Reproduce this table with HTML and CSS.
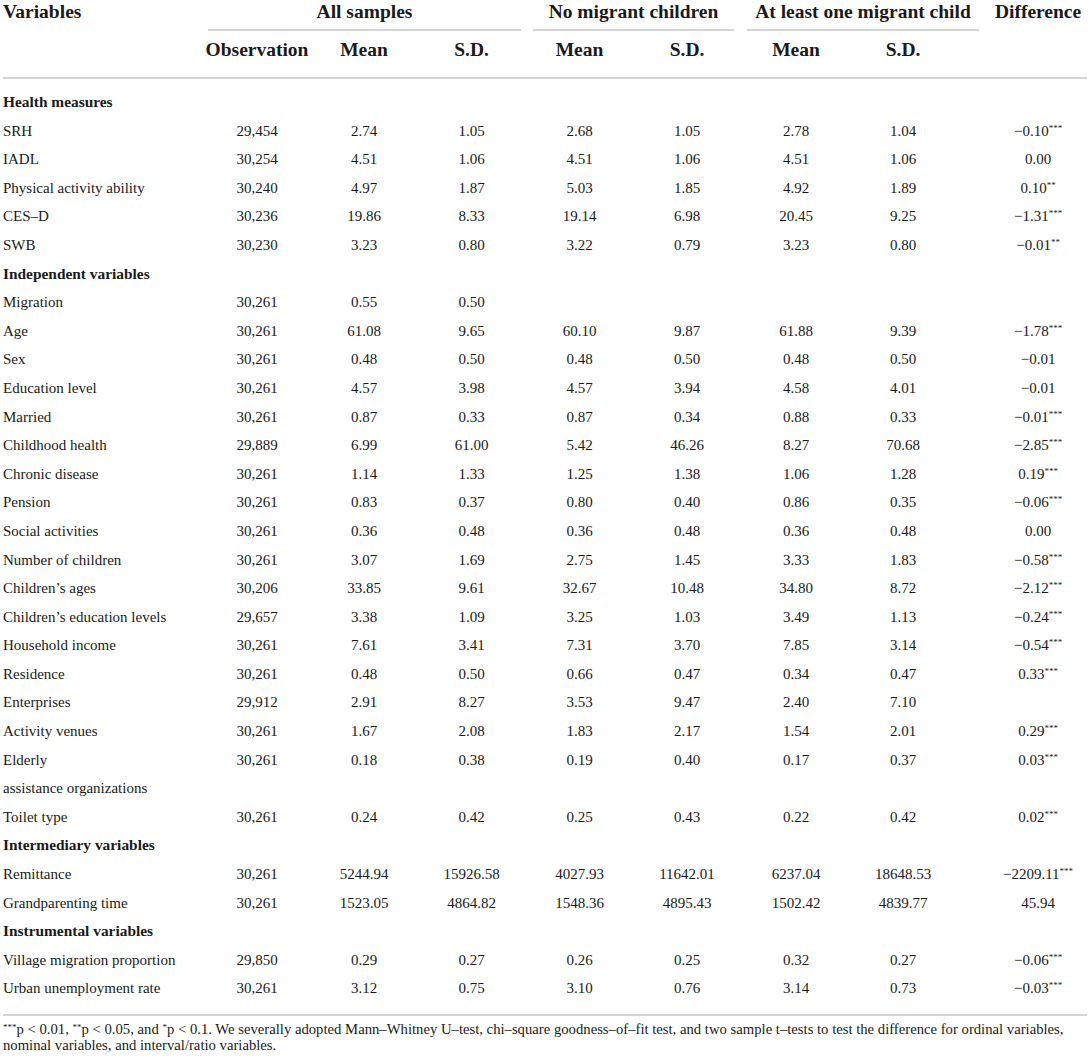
FILE: index.html
```html
<!DOCTYPE html>
<html lang="en">
<head>
<meta charset="utf-8">
<title>Descriptive statistics</title>
<link rel="stylesheet" href="styles.css">
</head>
<body>
<div class="wrap">
<table class="stats">
  <colgroup>
    <col class="c-var">
    <col class="c-obs">
    <col class="c-mean">
    <col class="c-sd">
    <col class="c-nm-mean">
    <col class="c-nm-sd">
    <col class="c-al-mean">
    <col class="c-al-sd">
    <col class="c-diff">
  </colgroup>
  <thead>
    <tr class="h1">
      <th rowspan="2" class="var">Variables</th>
      <th colspan="3" class="grp"><div class="grp-label g-all">All samples</div></th>
      <th colspan="2" class="grp"><div class="grp-label g-nm">No migrant children</div></th>
      <th colspan="2" class="grp"><div class="grp-label g-al">At least one migrant child</div></th>
      <th rowspan="2" class="diff">Difference</th>
    </tr>
    <tr class="h2">
      <th>Observation</th>
      <th>Mean</th>
      <th>S.D.</th>
      <th>Mean</th>
      <th>S.D.</th>
      <th>Mean</th>
      <th class="al-sd">S.D.</th>
    </tr>
  </thead>
  <tbody>
    <tr class="sec first"><td colspan="9">Health measures</td></tr>
    <tr><td>SRH</td><td>29,454</td><td>2.74</td><td>1.05</td><td>2.68</td><td>1.05</td><td>2.78</td><td class="al-sd">1.04</td><td class="d">−0.10<sup>***</sup></td></tr>
    <tr><td>IADL</td><td>30,254</td><td>4.51</td><td>1.06</td><td>4.51</td><td>1.06</td><td>4.51</td><td class="al-sd">1.06</td><td class="d">0.00</td></tr>
    <tr><td>Physical activity ability</td><td>30,240</td><td>4.97</td><td>1.87</td><td>5.03</td><td>1.85</td><td>4.92</td><td class="al-sd">1.89</td><td class="d">0.10<sup>**</sup></td></tr>
    <tr><td>CES–D</td><td>30,236</td><td>19.86</td><td>8.33</td><td>19.14</td><td>6.98</td><td>20.45</td><td class="al-sd">9.25</td><td class="d">−1.31<sup>***</sup></td></tr>
    <tr><td>SWB</td><td>30,230</td><td>3.23</td><td>0.80</td><td>3.22</td><td>0.79</td><td>3.23</td><td class="al-sd">0.80</td><td class="d">−0.01<sup>**</sup></td></tr>
    <tr class="sec"><td colspan="9">Independent variables</td></tr>
    <tr><td>Migration</td><td>30,261</td><td>0.55</td><td>0.50</td><td></td><td></td><td></td><td class="al-sd"></td><td class="d"></td></tr>
    <tr><td>Age</td><td>30,261</td><td>61.08</td><td>9.65</td><td>60.10</td><td>9.87</td><td>61.88</td><td class="al-sd">9.39</td><td class="d">−1.78<sup>***</sup></td></tr>
    <tr><td>Sex</td><td>30,261</td><td>0.48</td><td>0.50</td><td>0.48</td><td>0.50</td><td>0.48</td><td class="al-sd">0.50</td><td class="d">−0.01</td></tr>
    <tr><td>Education level</td><td>30,261</td><td>4.57</td><td>3.98</td><td>4.57</td><td>3.94</td><td>4.58</td><td class="al-sd">4.01</td><td class="d">−0.01</td></tr>
    <tr><td>Married</td><td>30,261</td><td>0.87</td><td>0.33</td><td>0.87</td><td>0.34</td><td>0.88</td><td class="al-sd">0.33</td><td class="d">−0.01<sup>***</sup></td></tr>
    <tr><td>Childhood health</td><td>29,889</td><td>6.99</td><td>61.00</td><td>5.42</td><td>46.26</td><td>8.27</td><td class="al-sd">70.68</td><td class="d">−2.85<sup>***</sup></td></tr>
    <tr><td>Chronic disease</td><td>30,261</td><td>1.14</td><td>1.33</td><td>1.25</td><td>1.38</td><td>1.06</td><td class="al-sd">1.28</td><td class="d">0.19<sup>***</sup></td></tr>
    <tr><td>Pension</td><td>30,261</td><td>0.83</td><td>0.37</td><td>0.80</td><td>0.40</td><td>0.86</td><td class="al-sd">0.35</td><td class="d">−0.06<sup>***</sup></td></tr>
    <tr><td>Social activities</td><td>30,261</td><td>0.36</td><td>0.48</td><td>0.36</td><td>0.48</td><td>0.36</td><td class="al-sd">0.48</td><td class="d">0.00</td></tr>
    <tr><td>Number of children</td><td>30,261</td><td>3.07</td><td>1.69</td><td>2.75</td><td>1.45</td><td>3.33</td><td class="al-sd">1.83</td><td class="d">−0.58<sup>***</sup></td></tr>
    <tr><td>Children’s ages</td><td>30,206</td><td>33.85</td><td>9.61</td><td>32.67</td><td>10.48</td><td>34.80</td><td class="al-sd">8.72</td><td class="d">−2.12<sup>***</sup></td></tr>
    <tr><td>Children’s education levels</td><td>29,657</td><td>3.38</td><td>1.09</td><td>3.25</td><td>1.03</td><td>3.49</td><td class="al-sd">1.13</td><td class="d">−0.24<sup>***</sup></td></tr>
    <tr><td>Household income</td><td>30,261</td><td>7.61</td><td>3.41</td><td>7.31</td><td>3.70</td><td>7.85</td><td class="al-sd">3.14</td><td class="d">−0.54<sup>***</sup></td></tr>
    <tr><td>Residence</td><td>30,261</td><td>0.48</td><td>0.50</td><td>0.66</td><td>0.47</td><td>0.34</td><td class="al-sd">0.47</td><td class="d">0.33<sup>***</sup></td></tr>
    <tr><td>Enterprises</td><td>29,912</td><td>2.91</td><td>8.27</td><td>3.53</td><td>9.47</td><td>2.40</td><td class="al-sd">7.10</td><td class="d"></td></tr>
    <tr><td>Activity venues</td><td>30,261</td><td>1.67</td><td>2.08</td><td>1.83</td><td>2.17</td><td>1.54</td><td class="al-sd">2.01</td><td class="d">0.29<sup>***</sup></td></tr>
    <tr><td>Elderly<br>assistance organizations</td><td>30,261</td><td>0.18</td><td>0.38</td><td>0.19</td><td>0.40</td><td>0.17</td><td class="al-sd">0.37</td><td class="d">0.03<sup>***</sup></td></tr>
    <tr><td>Toilet type</td><td>30,261</td><td>0.24</td><td>0.42</td><td>0.25</td><td>0.43</td><td>0.22</td><td class="al-sd">0.42</td><td class="d">0.02<sup>***</sup></td></tr>
    <tr class="sec"><td colspan="9">Intermediary variables</td></tr>
    <tr><td>Remittance</td><td>30,261</td><td>5244.94</td><td>15926.58</td><td>4027.93</td><td>11642.01</td><td>6237.04</td><td class="al-sd">18648.53</td><td class="d">−2209.11<sup>***</sup></td></tr>
    <tr><td>Grandparenting time</td><td>30,261</td><td>1523.05</td><td>4864.82</td><td>1548.36</td><td>4895.43</td><td>1502.42</td><td class="al-sd">4839.77</td><td class="d">45.94</td></tr>
    <tr class="sec"><td colspan="9">Instrumental variables</td></tr>
    <tr><td>Village migration proportion</td><td>29,850</td><td>0.29</td><td>0.27</td><td>0.26</td><td>0.25</td><td>0.32</td><td class="al-sd">0.27</td><td class="d">−0.06<sup>***</sup></td></tr>
    <tr class="last"><td>Urban unemployment rate</td><td>30,261</td><td>3.12</td><td>0.75</td><td>3.10</td><td>0.76</td><td>3.14</td><td class="al-sd">0.73</td><td class="d">−0.03<sup>***</sup></td></tr>
  </tbody>
</table>
<p class="note"><sup>***</sup>p &lt; 0.01, <sup>**</sup>p &lt; 0.05, and <sup>*</sup>p &lt; 0.1. We severally adopted Mann–Whitney U–test, chi–square goodness–of–fit test, and two sample t–tests to test the difference for ordinal variables, nominal variables, and interval/ratio variables.</p>
</div>
</body>
</html>
```

FILE: styles.css
```css
html, body {
  margin: 0;
  padding: 0;
  background: #ffffff;
}

body {
  font-family: "Liberation Serif", "Times New Roman", serif;
  color: #1a1a1a;
}

.wrap {
  width: 1084px;
  margin-left: 3px;
}

.stats {
  width: 1084px;
  table-layout: fixed;
  border-collapse: separate;
  border-spacing: 0;
}

.c-var { width: 200px; }
.c-obs { width: 108px; }
.c-mean { width: 106px; }
.c-sd { width: 109px; }
.c-nm-mean { width: 107px; }
.c-nm-sd { width: 108px; }
.c-al-mean { width: 110px; }
.c-al-sd { width: 134px; }
.c-diff { width: 102px; }

/* header */
.stats th {
  font-size: 19.5px;
  font-weight: bold;
  line-height: 24px;
  padding: 0;
  text-align: center;
  vertical-align: top;
  white-space: nowrap;
}

.stats th.var {
  text-align: left;
  border-bottom: 2px solid #d5d5d5;
}

.stats th.diff {
  border-bottom: 2px solid #d5d5d5;
  padding-left: 4px;
}

.grp-label {
  padding-bottom: 5px;
  border-bottom: 2px solid #d5d5d5;
}

.g-all { margin: 0 5px; }
.g-nm { margin: 0 7px; }
.g-al { margin: 0 6px; }

.h2 th {
  padding-top: 7px;
  padding-bottom: 15px;
  border-bottom: 2px solid #d5d5d5;
}

.stats .al-sd {
  padding-right: 30px;
}

/* body */
.stats td {
  font-size: 15px;
  line-height: 28.6px;
  padding: 0;
  text-align: center;
  vertical-align: top;
  white-space: nowrap;
}

.stats td:first-child {
  text-align: left;
}

.stats td.d {
  padding-left: 4px;
}

.stats tr.sec td {
  font-weight: bold;
  font-size: 15.4px;
}

.stats tr.first td {
  padding-top: 9px;
}

.stats tr.last td {
  padding-bottom: 11px;
  border-bottom: 2px solid #d5d5d5;
}

sup {
  font-size: 9px;
  line-height: 0;
  vertical-align: 5px;
}

.note {
  margin: 0;
  padding-top: 5px;
  font-size: 14.7px;
  line-height: 16px;
}

.note sup {
  vertical-align: 4px;
}
```
